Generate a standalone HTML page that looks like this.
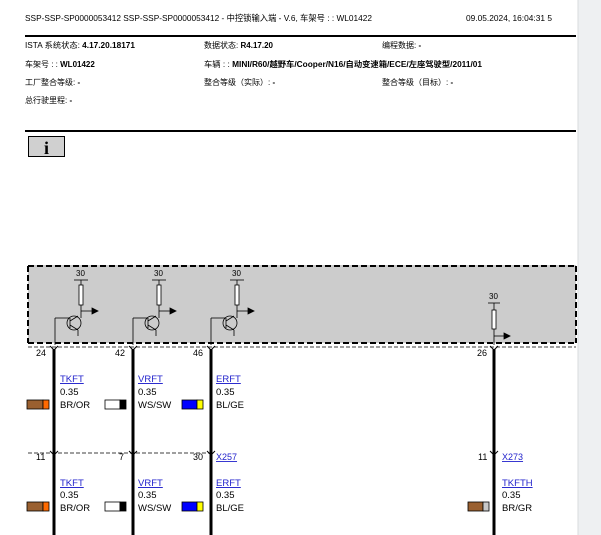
<!DOCTYPE html>
<html><head><meta charset="utf-8"><style>
body{margin:0;width:601px;height:535px;overflow:hidden;background:#fff;font-family:"Liberation Sans","Noto Sans CJK SC",sans-serif;}
svg{position:absolute;left:0;top:0}
</style></head><body>
<svg width="601" height="535" viewBox="0 0 601 535" xmlns="http://www.w3.org/2000/svg" font-family="Liberation Sans, Noto Sans CJK SC, sans-serif">
<rect x="578" y="0" width="23" height="535" fill="#eef0f2"/>
<line x1="578" y1="0" x2="578" y2="535" stroke="#d8dbde"/>
<g font-size="8.3" fill="#000">
<text x="25" y="21" textLength="347" lengthAdjust="spacingAndGlyphs">SSP-SSP-SP0000053412 SSP-SSP-SP0000053412 - 中控锁输入端 - V.6, 车架号 : : WL01422</text>
<text x="466" y="21" textLength="86" lengthAdjust="spacingAndGlyphs">09.05.2024, 16:04:31 5</text>
</g>
<rect x="25" y="35" width="551" height="2" fill="#000"/>
<g font-size="8" fill="#000">
<text x="25" y="48" textLength="110" lengthAdjust="spacingAndGlyphs">ISTA 系统状态: <tspan font-weight="bold">4.17.20.18171</tspan></text>
<text x="204" y="48" textLength="69" lengthAdjust="spacingAndGlyphs">数据状态: <tspan font-weight="bold">R4.17.20</tspan></text>
<text x="382" y="48">编程数据: <tspan font-weight="bold">-</tspan></text>
<text x="25" y="67">车架号 : : <tspan font-weight="bold">WL01422</tspan></text>
<text x="204" y="67" textLength="278" lengthAdjust="spacingAndGlyphs">车辆 : : <tspan font-weight="bold">MINI/R60/越野车/Cooper/N16/自动变速箱/ECE/左座驾驶型/2011/01</tspan></text>
<text x="25" y="85">工厂整合等级: <tspan font-weight="bold">-</tspan></text>
<text x="204" y="85">整合等级（实际）: <tspan font-weight="bold">-</tspan></text>
<text x="382" y="85">整合等级（目标）: <tspan font-weight="bold">-</tspan></text>
<text x="25" y="103">总行驶里程: <tspan font-weight="bold">-</tspan></text>
</g>
<rect x="25" y="130" width="551" height="2" fill="#000"/>
<rect x="28.5" y="136.5" width="36" height="20" fill="#d0d0d0" stroke="#000"/>
<text x="46.5" y="154" font-family="Liberation Serif,serif" font-weight="bold" font-size="18" text-anchor="middle">i</text>
<rect x="28" y="265" width="548" height="78" fill="#cccccc"/>
<path d="M28 266 H576 M28 266 V343 M576 266 V343 M28 343 H576" stroke="#000" stroke-width="2" stroke-dasharray="6,3" fill="none"/>
<line x1="28" y1="347" x2="576" y2="347" stroke="#000" stroke-width="0.8" stroke-dasharray="4,2"/>
<line x1="28" y1="453" x2="211" y2="453" stroke="#000" stroke-width="0.8" stroke-dasharray="4,2"/>
<g stroke="#000" stroke-width="0.8" fill="none">
<g>
<line x1="74" y1="280" x2="88" y2="280"/><line x1="81" y1="280" x2="81" y2="285"/>
<rect x="79" y="285" width="4" height="20" fill="#fff"/><line x1="81" y1="305" x2="81" y2="318"/>
<line x1="81" y1="311" x2="92" y2="311"/><path d="M92 308 L98 311 L92 314Z" fill="#000"/>
<circle cx="74" cy="323" r="7"/><line x1="70" y1="318" x2="70" y2="328"/><line x1="55" y1="318" x2="70" y2="318"/><line x1="55" y1="318" x2="55" y2="345"/>
<line x1="70" y1="321" x2="78" y2="316"/><line x1="70" y1="325" x2="78" y2="330"/><line x1="78" y1="330" x2="78" y2="336"/>
</g>
<g transform="translate(78,0)">
<line x1="74" y1="280" x2="88" y2="280"/><line x1="81" y1="280" x2="81" y2="285"/>
<rect x="79" y="285" width="4" height="20" fill="#fff"/><line x1="81" y1="305" x2="81" y2="318"/>
<line x1="81" y1="311" x2="92" y2="311"/><path d="M92 308 L98 311 L92 314Z" fill="#000"/>
<circle cx="74" cy="323" r="7"/><line x1="70" y1="318" x2="70" y2="328"/><line x1="55" y1="318" x2="70" y2="318"/><line x1="55" y1="318" x2="55" y2="345"/>
<line x1="70" y1="321" x2="78" y2="316"/><line x1="70" y1="325" x2="78" y2="330"/><line x1="78" y1="330" x2="78" y2="336"/>
</g>
<g transform="translate(156,0)">
<line x1="74" y1="280" x2="88" y2="280"/><line x1="81" y1="280" x2="81" y2="285"/>
<rect x="79" y="285" width="4" height="20" fill="#fff"/><line x1="81" y1="305" x2="81" y2="318"/>
<line x1="81" y1="311" x2="92" y2="311"/><path d="M92 308 L98 311 L92 314Z" fill="#000"/>
<circle cx="74" cy="323" r="7"/><line x1="70" y1="318" x2="70" y2="328"/><line x1="55" y1="318" x2="70" y2="318"/><line x1="55" y1="318" x2="55" y2="345"/>
<line x1="70" y1="321" x2="78" y2="316"/><line x1="70" y1="325" x2="78" y2="330"/><line x1="78" y1="330" x2="78" y2="336"/>
</g>
<line x1="488" y1="303" x2="500" y2="303"/><line x1="494" y1="303" x2="494" y2="310"/>
<rect x="492" y="310" width="4" height="19" fill="#fff"/><line x1="494" y1="329" x2="494" y2="345"/>
<line x1="494" y1="336" x2="504" y2="336"/><path d="M504 333 L510 336 L504 339Z" fill="#000"/>
</g>
<g font-size="8" fill="#000">
<text x="76" y="276">30</text><text x="154" y="276">30</text><text x="232" y="276">30</text><text x="489" y="299">30</text>
</g>
<g stroke="#000" stroke-width="3">
<line x1="54" y1="349" x2="54" y2="535"/><line x1="133" y1="349" x2="133" y2="535"/>
<line x1="211" y1="349" x2="211" y2="535"/><line x1="494" y1="349" x2="494" y2="535"/>
</g>
<g stroke="#000" stroke-width="1" fill="none">
<path d="M50 346 L54 350 L58 346 M129 346 L133 350 L137 346 M207 346 L211 350 L215 346 M490 346 L494 350 L498 346"/>
<path d="M50 451 L54 455 L58 451 M129 451 L133 455 L137 451 M207 451 L211 455 L215 451 M490 451 L494 455 L498 451"/>
</g>
<g font-size="9" fill="#000">
<text x="36" y="356">24</text><text x="115" y="356">42</text><text x="193" y="356">46</text><text x="477" y="356">26</text>
<text x="36" y="460">11</text><text x="119" y="460">7</text><text x="193" y="460">30</text><text x="478" y="460">11</text>
<text x="216" y="460" fill="#2222cc" text-decoration="underline">X257</text>
<text x="502" y="460" fill="#2222cc" text-decoration="underline">X273</text>
</g>
<g font-size="9.5">
<g fill="#2222cc" text-decoration="underline">
<text x="60" y="382">TKFT</text><text x="138" y="382">VRFT</text><text x="216" y="382">ERFT</text>
<text x="60" y="486">TKFT</text><text x="138" y="486">VRFT</text><text x="216" y="486">ERFT</text><text x="502" y="486">TKFTH</text>
</g>
<g fill="#000">
<text x="60" y="395">0.35</text><text x="138" y="395">0.35</text><text x="216" y="395">0.35</text>
<text x="60" y="408">BR/OR</text><text x="138" y="408">WS/SW</text><text x="216" y="408">BL/GE</text>
<text x="60" y="498">0.35</text><text x="138" y="498">0.35</text><text x="216" y="498">0.35</text><text x="502" y="498">0.35</text>
<text x="60" y="511">BR/OR</text><text x="138" y="511">WS/SW</text><text x="216" y="511">BL/GE</text><text x="502" y="511">BR/GR</text>
</g>
</g>
<g stroke="#000" stroke-width="0.8">
<rect x="27" y="400" width="16" height="9" fill="#9a6030"/><rect x="43" y="400" width="6" height="9" fill="#ff6a00"/>
<rect x="105" y="400" width="15" height="9" fill="#fff"/><rect x="120" y="400" width="6" height="9" fill="#000"/>
<rect x="182" y="400" width="15" height="9" fill="#0000ff"/><rect x="197" y="400" width="6" height="9" fill="#ffff00"/>
<rect x="27" y="502" width="16" height="9" fill="#9a6030"/><rect x="43" y="502" width="6" height="9" fill="#ff6a00"/>
<rect x="105" y="502" width="15" height="9" fill="#fff"/><rect x="120" y="502" width="6" height="9" fill="#000"/>
<rect x="182" y="502" width="15" height="9" fill="#0000ff"/><rect x="197" y="502" width="6" height="9" fill="#ffff00"/>
<rect x="468" y="502" width="15" height="9" fill="#9a6030"/><rect x="483" y="502" width="6" height="9" fill="#c8c8c8"/>
</g>
</svg>
</body></html>
